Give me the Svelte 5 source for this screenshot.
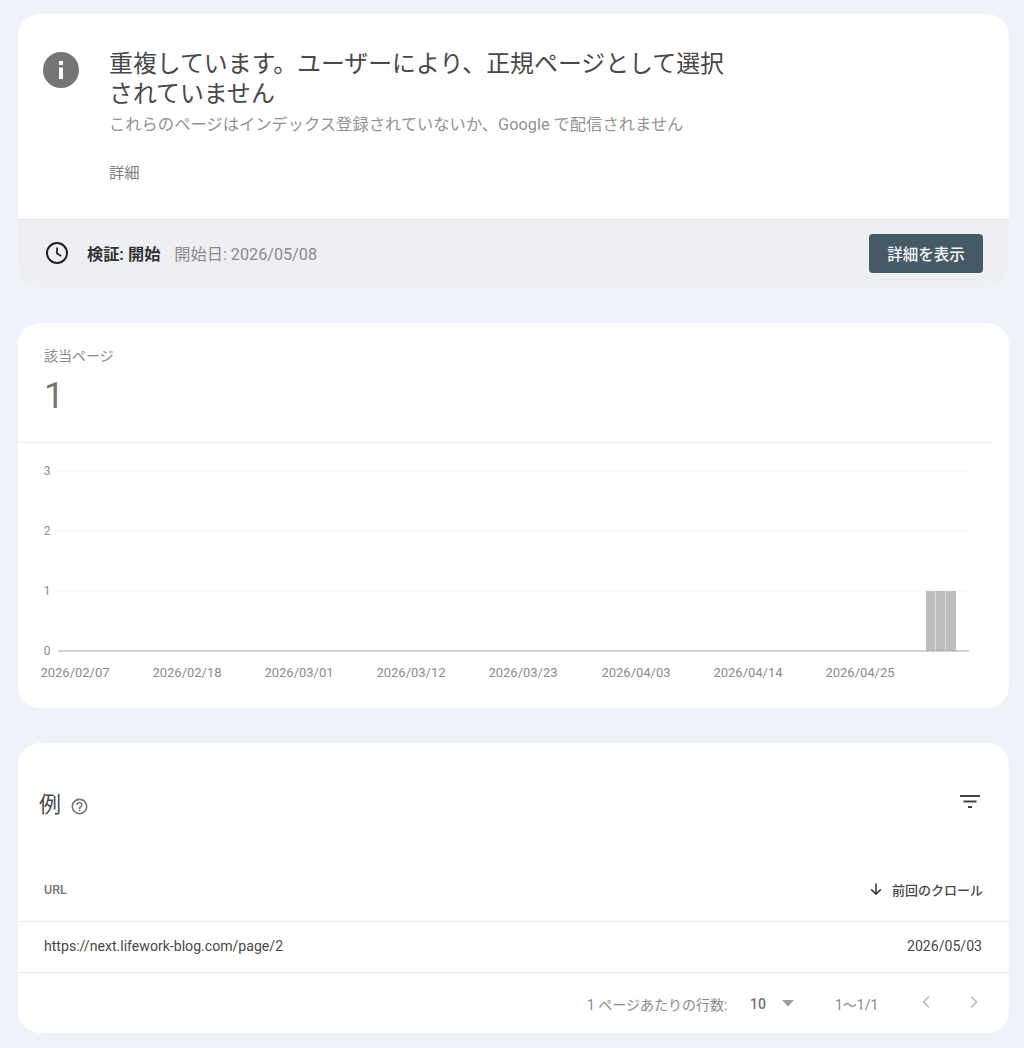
<script>
  const dates = ['2026/02/07','2026/02/18','2026/03/01','2026/03/12','2026/03/23','2026/04/03','2026/04/14','2026/04/25'];
  const centers = [75,187,299,411,523,636,748,860];
  const grid = [{ y: 28, v: '3' }, { y: 88, v: '2' }, { y: 148, v: '1' }];
  const bars = [{ x: 908, w: 9.5 }, { x: 918, w: 9.5 }, { x: 928, w: 10 }];
</script>

<div class="page">
  <section class="card">
    <div class="head">
      <svg class="info" viewBox="0 0 36 36" aria-hidden="true">
        <circle cx="18" cy="18" r="18" fill="#757575"/>
        <rect x="16" y="15.5" width="4" height="11.5" fill="#fff"/>
        <rect x="16" y="9" width="4" height="4" fill="#fff"/>
      </svg>
      <div class="headtext">
        <h1>重複しています。ユーザーにより、正規ページとして選択されていません</h1>
        <p class="sub">これらのページはインデックス登録されていないか、Google で配信されません</p>
        <p class="more">詳細</p>
      </div>
    </div>
    <div class="status">
      <svg class="clock" viewBox="0 0 24 24" aria-hidden="true">
        <circle cx="12" cy="12" r="10" fill="none" stroke="#212121" stroke-width="2"/>
        <path d="M12 6.5V12.4L16.2 14.9" fill="none" stroke="#212121" stroke-width="1.7"/>
      </svg>
      <strong>検証: 開始</strong>
      <span class="started">開始日: 2026/05/08</span>
      <button>詳細を表示</button>
    </div>
  </section>

  <section class="card chartcard">
    <div class="metric">
      <div class="metric-label">該当ページ</div>
      <div class="metric-value">1</div>
    </div>
    <div class="chart">
      <svg width="991" height="266" viewBox="0 0 991 266" role="img" aria-label="該当ページのグラフ">
        {#each grid as g}
          <line x1="40" x2="951" y1={g.y} y2={g.y} stroke="#f1f1f1"/>
          <text x="29" y={g.y + 4} text-anchor="middle" class="axis">{g.v}</text>
        {/each}
        {#each bars as b}
          <rect x={b.x} y="148" width={b.w} height="60" fill="#bdbdbd"/>
        {/each}
        <line x1="40" x2="951" y1="208" y2="208" stroke="#a8a8a8" stroke-width="1.2"/>
        <text x="29" y="212" text-anchor="middle" class="axis">0</text>
        {#each dates as d, i}
          <text x={centers[i] - 18} y="234" text-anchor="middle" class="axis date">{d}</text>
        {/each}
      </svg>
    </div>
  </section>

  <section class="card examples">
    <div class="ex-head">
      <h2>例</h2>
      <svg class="help" viewBox="0 0 24 24" aria-hidden="true">
        <path fill="#757575" d="M11 18h2v-2h-2v2zm1-16C6.48 2 2 6.48 2 12s4.48 10 10 10 10-4.48 10-10S17.52 2 12 2zm0 18c-4.41 0-8-3.59-8-8s3.59-8 8-8 8 3.59 8 8-3.59 8-8 8zm0-14c-2.21 0-4 1.79-4 4h2c0-1.1.9-2 2-2s2 .9 2 2c0 2-3 1.75-3 5h2c0-2.25 3-2.5 3-5 0-2.21-1.79-4-4-4z"/>
      </svg>
      <svg class="filter" viewBox="0 0 20 14" aria-hidden="true">
        <path fill="#424242" d="M0 0h20v2H0zM3.500 5.500h13v2h-13zM8 11h4v2H8z"/>
      </svg>
    </div>
    <div class="row thead">
      <span class="th-url">URL</span>
      <span class="th-sort">
        <svg viewBox="0 0 14 14" aria-hidden="true">
          <path d="M7 1.500V12M2.200 7.400L7 12.200l4.800-4.800" fill="none" stroke="#333" stroke-width="1.5"/>
        </svg>
        前回のクロール
      </span>
    </div>
    <div class="row tbody">
      <span>https://next.lifework-blog.com/page/2</span>
      <span>2026/05/03</span>
    </div>
    <div class="pager">
      <span class="rows-label">1 ページあたりの行数:</span>
      <span class="rows-value">10</span>
      <svg class="caret" viewBox="0 0 12 7" aria-hidden="true"><path d="M0 0h12L6 6.500z" fill="#9e9e9e"/></svg>
      <span class="range">1〜1/1</span>
      <svg class="chev first" viewBox="0 0 10 14" aria-hidden="true"><path d="M8 1.500L2.500 7 8 12.500" fill="none" stroke="#bdbdbd" stroke-width="1.7"/></svg>
      <svg class="chev" viewBox="0 0 10 14" aria-hidden="true"><path d="M2 1.500L7.500 7 2 12.500" fill="none" stroke="#bdbdbd" stroke-width="1.7"/></svg>
    </div>
  </section>
</div>

<style>
  :global(body) {
    margin: 0;
    background: #f0f2f9;
  }
  .page {
    box-sizing: border-box;
    height: 1048px;
    padding: 14px 15px 0 18px;
    display: flex;
    flex-direction: column;
    gap: 35px;
    font-family: Roboto, "Noto Sans CJK JP", sans-serif;
    color: #212121;
  }
  .card {
    background: #fff;
    border-radius: 22px;
    overflow: hidden;
  }
  .head {
    box-sizing: border-box;
    height: 206px;
    padding: 38px 25px 0;
    display: flex;
    gap: 30px;
    border-bottom: 1px solid #e3e3e3;
  }
  .info {
    width: 36px;
    height: 36px;
    flex: none;
  }
  .headtext {
    width: 630px;
    margin-top: -3px;
  }
  h1 {
    margin: 0;
    font-size: 23.9px;
    line-height: 30px;
    font-weight: 400;
    color: #484848;
  }
  .sub {
    margin: 4px 0 0;
    font-size: 16.3px;
    line-height: 24px;
    color: #929292;
    white-space: nowrap;
  }
  .more {
    margin: 24px 0 0;
    font-size: 15.3px;
    line-height: 24px;
    color: #7c7c7c;
  }
  .status {
    box-sizing: border-box;
    height: 68px;
    background: #eeeff2;
    display: flex;
    align-items: center;
    padding: 0 26px 2px 27px;
  }
  .clock {
    width: 24px;
    height: 24px;
    flex: none;
    margin-right: 18px;
  }
  .status strong {
    font-size: 16.2px;
    font-weight: 700;
    color: #333;
    margin-right: 14px;
  }
  .started {
    font-size: 16.2px;
    color: #8a8a8a;
  }
  button {
    margin-left: auto;
    width: 114px;
    height: 39px;
    border: 0;
    border-radius: 4px;
    background: #455a64;
    color: #f4f6f7;
    font: 500 15.500px Roboto, "Noto Sans CJK JP", sans-serif;
    padding: 0;
  }
  .chartcard {
    height: 385px;
  }
  .metric {
    box-sizing: border-box;
    width: 974px;
    height: 120px;
    padding: 23px 0 0 26px;
    border-bottom: 1px solid #ececec;
  }
  .metric-label {
    font-size: 14px;
    line-height: 20px;
    color: #8a8a8a;
  }
  .metric-value {
    font-size: 36px;
    line-height: 42px;
    margin-top: 9px;
    font-weight: 400;
    color: #757575;
  }
  .chart svg {
    display: block;
  }
  .axis {
    font-family: Roboto, sans-serif;
    font-size: 12px;
    fill: #8a8a8a;
  }
  .date {
    font-size: 13px;
  }
  .examples {
    height: 290px;
    display: flex;
    flex-direction: column;
  }
  .ex-head {
    height: 124px;
    box-sizing: border-box;
    padding: 46px 29px 0 22px;
    display: flex;
    align-items: flex-start;
  }
  h2 {
    margin: 0 0 0 -1px;
    font-size: 22px;
    line-height: 32px;
    font-weight: 400;
    color: #484848;
  }
  .help {
    width: 19px;
    height: 19px;
    margin: 8px 0 0 9px;
  }
  .filter {
    width: 20px;
    height: 14px;
    margin: 6px 0 0 auto;
  }
  .row {
    display: flex;
    justify-content: space-between;
    align-items: center;
    padding: 0 26px;
  }
  .thead {
    height: 55px;
    padding-bottom: 10px;
    box-sizing: border-box;
    border-bottom: 1px solid #ececec;
  }
  .th-url {
    font-size: 12.500px;
    font-weight: 500;
    color: #757575;
  }
  .th-sort {
    display: flex;
    align-items: center;
    gap: 9px;
    font-size: 13px;
    font-weight: 500;
    color: #484848;
  }
  .th-sort svg {
    width: 14px;
    height: 14px;
  }
  .tbody {
    height: 51px;
    box-sizing: border-box;
    padding-right: 27px;
    padding-bottom: 2px;
    border-bottom: 1px solid #ececec;
    font-size: 14.100px;
    color: #484848;
  }
  .pager {
    flex: 1;
    display: flex;
    align-items: center;
    padding-left: 569px;
    padding-top: 2px;
    font-size: 14px;
    color: #8a8a8a;
  }
  .rows-label {
    width: 163px;
    white-space: nowrap;
  }
  .rows-value {
    width: 32px;
    font-weight: 500;
    color: #707070;
  }
  .caret {
    width: 12px;
    height: 7px;
    margin-top: -2px;
  }
  .range {
    margin-left: 41px;
    width: 42px;
    white-space: nowrap;
  }
  .chev {
    width: 10px;
    height: 14px;
    margin-left: 38px;
    margin-top: -5px;
  }
  .chev.first {
    margin-left: 44px;
  }
</style>
